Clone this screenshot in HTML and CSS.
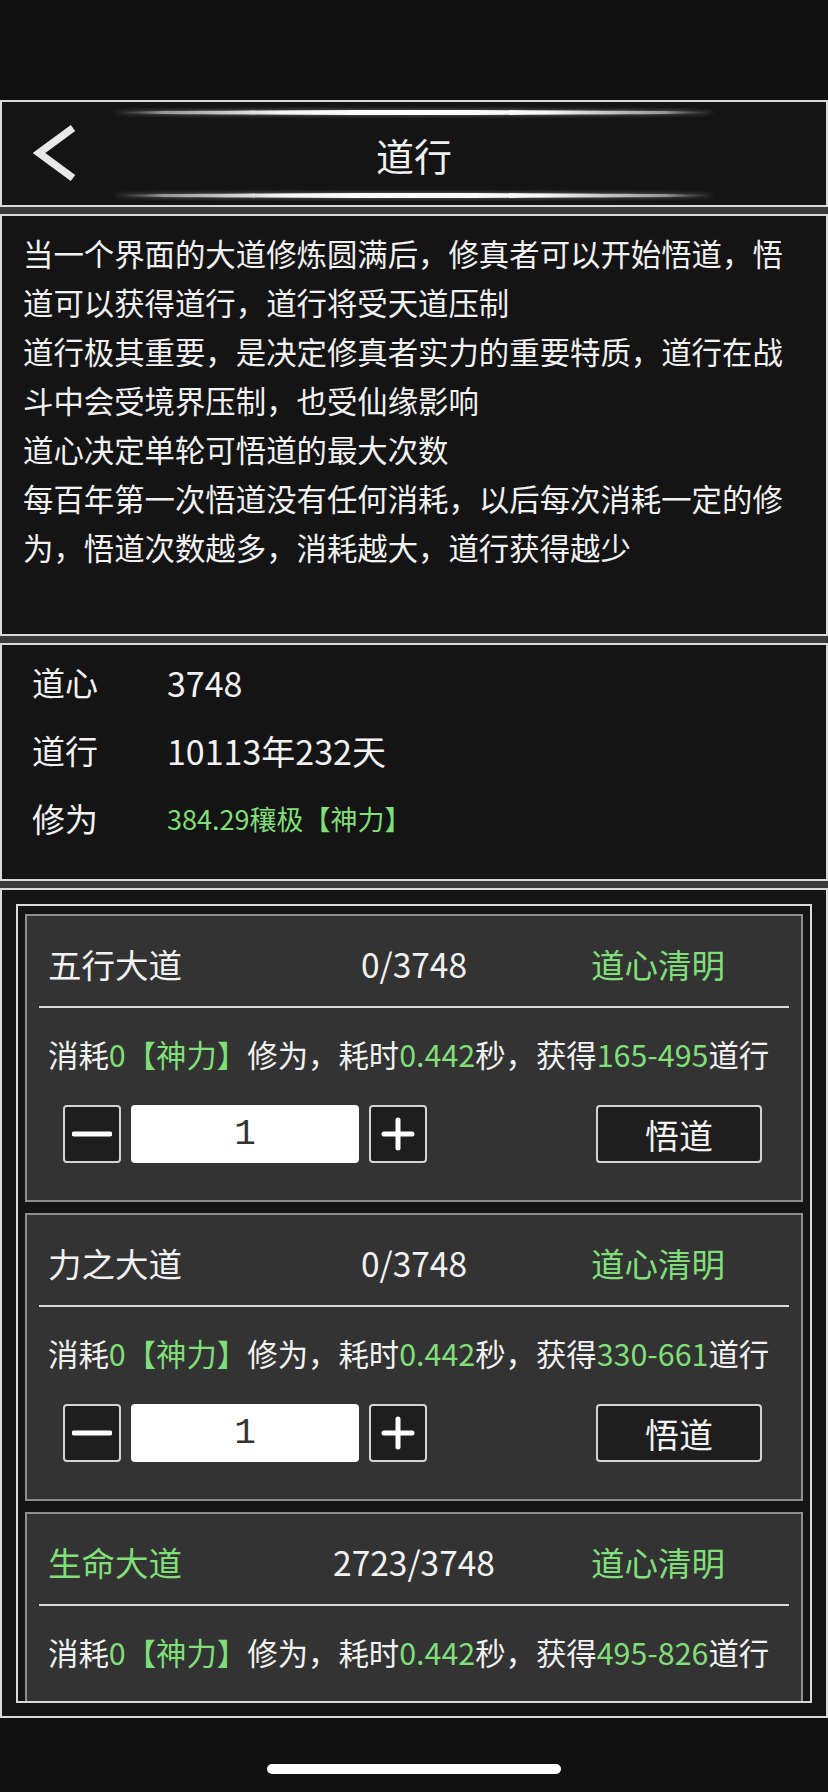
FILE: index.html
```html
<!DOCTYPE html>
<html lang="zh-CN">
<head>
  <meta charset="UTF-8" />
  <meta name="viewport" content="width=device-width, initial-scale=1.0" />
  <title>道行</title>
  <link rel="stylesheet" href="styles.css">
</head>
<body>
  <div class="status-bar"></div>

  <div class="panels">
    <div class="nav">
      <div class="glow"></div>
      <div class="nav-row">
        <div class="back">
          <svg width="46" height="62" viewBox="0 0 46 62">
            <polyline points="40,5 6,30 40,55" fill="none" stroke="#e8e8e8" stroke-width="7.5" stroke-linejoin="miter" />
          </svg>
        </div>
        <h1>道行</h1>
        <div></div>
      </div>
      <div class="glow"></div>
    </div>

    <div class="box intro">
      <p>当一个界面的大道修炼圆满后，修真者可以开始悟道，悟道可以获得道行，道行将受天道压制</p>
      <p>道行极其重要，是决定修真者实力的重要特质，道行在战斗中会受境界压制，也受仙缘影响</p>
      <p>道心决定单轮可悟道的最大次数</p>
      <p>每百年第一次悟道没有任何消耗，以后每次消耗一定的修为，悟道次数越多，消耗越大，道行获得越少</p>
    </div>

    <div class="box stats">
      <div class="stat-row"><span class="stat-label">道心</span><span>3748</span></div>
      <div class="stat-row"><span class="stat-label">道行</span><span>10113年232天</span></div>
      <div class="stat-row"><span class="stat-label">修为</span><span class="green small">384.29穰极【神力】</span></div>
    </div>

    <div class="box list">
      <div class="list-frame">

        <div class="dao-card">
          <div class="dao-head">
            <span>五行大道</span>
            <span class="center">0/3748</span>
            <span class="center green">道心清明</span>
          </div>
          <div class="cost">消耗<span class="green">0【神力】</span>修为，耗时<span class="green">0.442</span>秒，获得<span class="green">165-495</span>道行</div>
          <div class="controls">
            <button class="step">
              <svg width="40" height="6" viewBox="0 0 40 6"><line x1="2" y1="3" x2="38" y2="3" stroke="#fff" stroke-width="5" stroke-linecap="round" /></svg>
            </button>
            <div class="amount">1</div>
            <button class="step">
              <svg width="34" height="34" viewBox="0 0 34 34"><path d="M3 17H31M17 3V31" stroke="#fff" stroke-width="5" stroke-linecap="round" /></svg>
            </button>
            <button class="go">悟道</button>
          </div>
        </div>

        <div class="dao-card">
          <div class="dao-head">
            <span>力之大道</span>
            <span class="center">0/3748</span>
            <span class="center green">道心清明</span>
          </div>
          <div class="cost">消耗<span class="green">0【神力】</span>修为，耗时<span class="green">0.442</span>秒，获得<span class="green">330-661</span>道行</div>
          <div class="controls">
            <button class="step">
              <svg width="40" height="6" viewBox="0 0 40 6"><line x1="2" y1="3" x2="38" y2="3" stroke="#fff" stroke-width="5" stroke-linecap="round" /></svg>
            </button>
            <div class="amount">1</div>
            <button class="step">
              <svg width="34" height="34" viewBox="0 0 34 34"><path d="M3 17H31M17 3V31" stroke="#fff" stroke-width="5" stroke-linecap="round" /></svg>
            </button>
            <button class="go">悟道</button>
          </div>
        </div>

        <div class="dao-card">
          <div class="dao-head">
            <span class="green">生命大道</span>
            <span class="center">2723/3748</span>
            <span class="center green">道心清明</span>
          </div>
          <div class="cost">消耗<span class="green">0【神力】</span>修为，耗时<span class="green">0.442</span>秒，获得<span class="green">495-826</span>道行</div>
          <div class="controls">
            <button class="step">
              <svg width="40" height="6" viewBox="0 0 40 6"><line x1="2" y1="3" x2="38" y2="3" stroke="#fff" stroke-width="5" stroke-linecap="round" /></svg>
            </button>
            <div class="amount">1</div>
            <button class="step">
              <svg width="34" height="34" viewBox="0 0 34 34"><path d="M3 17H31M17 3V31" stroke="#fff" stroke-width="5" stroke-linecap="round" /></svg>
            </button>
            <button class="go">悟道</button>
          </div>
        </div>

      </div>
    </div>
  </div>

  <div class="home-bar"></div>
</body>
</html>
```

FILE: styles.css
```css
body {
  margin: 0;
  width: 828px;
  height: 1792px;
  overflow: hidden;
  background: #111111;
  color: #f2f2f2;
  font-family: "Noto Sans CJK SC", "Noto Sans", sans-serif;
}
.status-bar {
  height: 100px;
}
.panels {
  display: flex;
  flex-direction: column;
  gap: 7px;
  background: #3b3b3b;
}
.box,
.nav {
  box-sizing: border-box;
  border: 2px solid #d9d9d9;
  background: #141414;
}

/* header */
.nav {
  height: 107px;
  padding: 8px 0 7px;
  display: flex;
  flex-direction: column;
}
.glow {
  width: 600px;
  height: 5px;
  margin: 0 auto;
  border-radius: 50%;
  background: linear-gradient(90deg, rgba(120, 120, 120, 0) 0%, rgba(180, 180, 180, 0.8) 8%, #f6f6f6 28%, #ffffff 50%, #f6f6f6 72%, rgba(180, 180, 180, 0.8) 92%, rgba(120, 120, 120, 0) 100%);
  box-shadow: 0 0 4px rgba(255, 255, 255, 0.4);
}
.nav-row {
  height: 80px;
  display: grid;
  grid-template-columns: 1fr auto 1fr;
  align-items: center;
}
.back {
  padding-left: 31px;
  display: flex;
  align-items: center;
}
.nav-row h1 {
  margin: 0;
  font-size: 38px;
  font-weight: 400;
  color: #f0f0f0;
}

/* intro text */
.intro {
  height: 422px;
  padding: 13px 30px 0 21px;
}
.intro p {
  margin: 0;
  font-size: 30.4px;
  line-height: 49px;
}

/* stats */
.stats {
  height: 238px;
  padding: 3px 30px 0;
}
.stat-row {
  height: 68px;
  display: flex;
  align-items: center;
  font-size: 33px;
}
.stat-label {
  width: 135px;
}
.stat-row span + span {
  font-size: 34px;
}
.stat-row .small {
  font-size: 27px;
}
.green {
  color: #80df78;
}

/* list */
.list {
  height: 830px;
  padding: 14px 14px 13px;
  display: flex;
  flex-direction: column;
}
.list-frame {
  flex: 1;
  overflow: hidden;
  border: 2px solid #d9d9d9;
  background: #141414;
  padding: 8px 7px 0;
  display: flex;
  flex-direction: column;
  gap: 11px;
}
.dao-card {
  flex-shrink: 0;
  background: #333333;
  border: 2px solid #8e8e8e;
  padding: 0 12px 37px;
}
.dao-head {
  box-sizing: border-box;
  height: 92px;
  padding: 4px 9px 0;
  border-bottom: 2px solid #d9d9d9;
  display: grid;
  grid-template-columns: 1fr 1fr 1fr;
  align-items: center;
  font-size: 33.5px;
}
.center {
  text-align: center;
}
.cost {
  margin-top: 24px;
  padding-left: 9px;
  font-size: 30.4px;
  line-height: 44px;
  white-space: nowrap;
}
.controls {
  margin-top: 29px;
  height: 58px;
  padding: 0 27px 0 24px;
  display: flex;
  gap: 10px;
}
.step,
.go {
  box-sizing: border-box;
  height: 58px;
  padding: 0;
  border: 2px solid #d4d4d4;
  border-radius: 4px;
  background: #1e1e1e;
  color: #f2f2f2;
  display: flex;
  align-items: center;
  justify-content: center;
}
.step {
  width: 58px;
}
.amount {
  width: 228px;
  height: 58px;
  border-radius: 4px;
  background: #ffffff;
  color: #333333;
  font-family: "Liberation Mono", monospace;
  font-size: 36px;
  display: flex;
  align-items: center;
  justify-content: center;
}
.go {
  margin-left: auto;
  width: 166px;
  font-family: "Noto Sans CJK SC", sans-serif;
  font-size: 34px;
}

.home-bar {
  width: 294px;
  height: 10px;
  margin: 46px auto 0;
  border-radius: 5px;
  background: #ffffff;
}
```
